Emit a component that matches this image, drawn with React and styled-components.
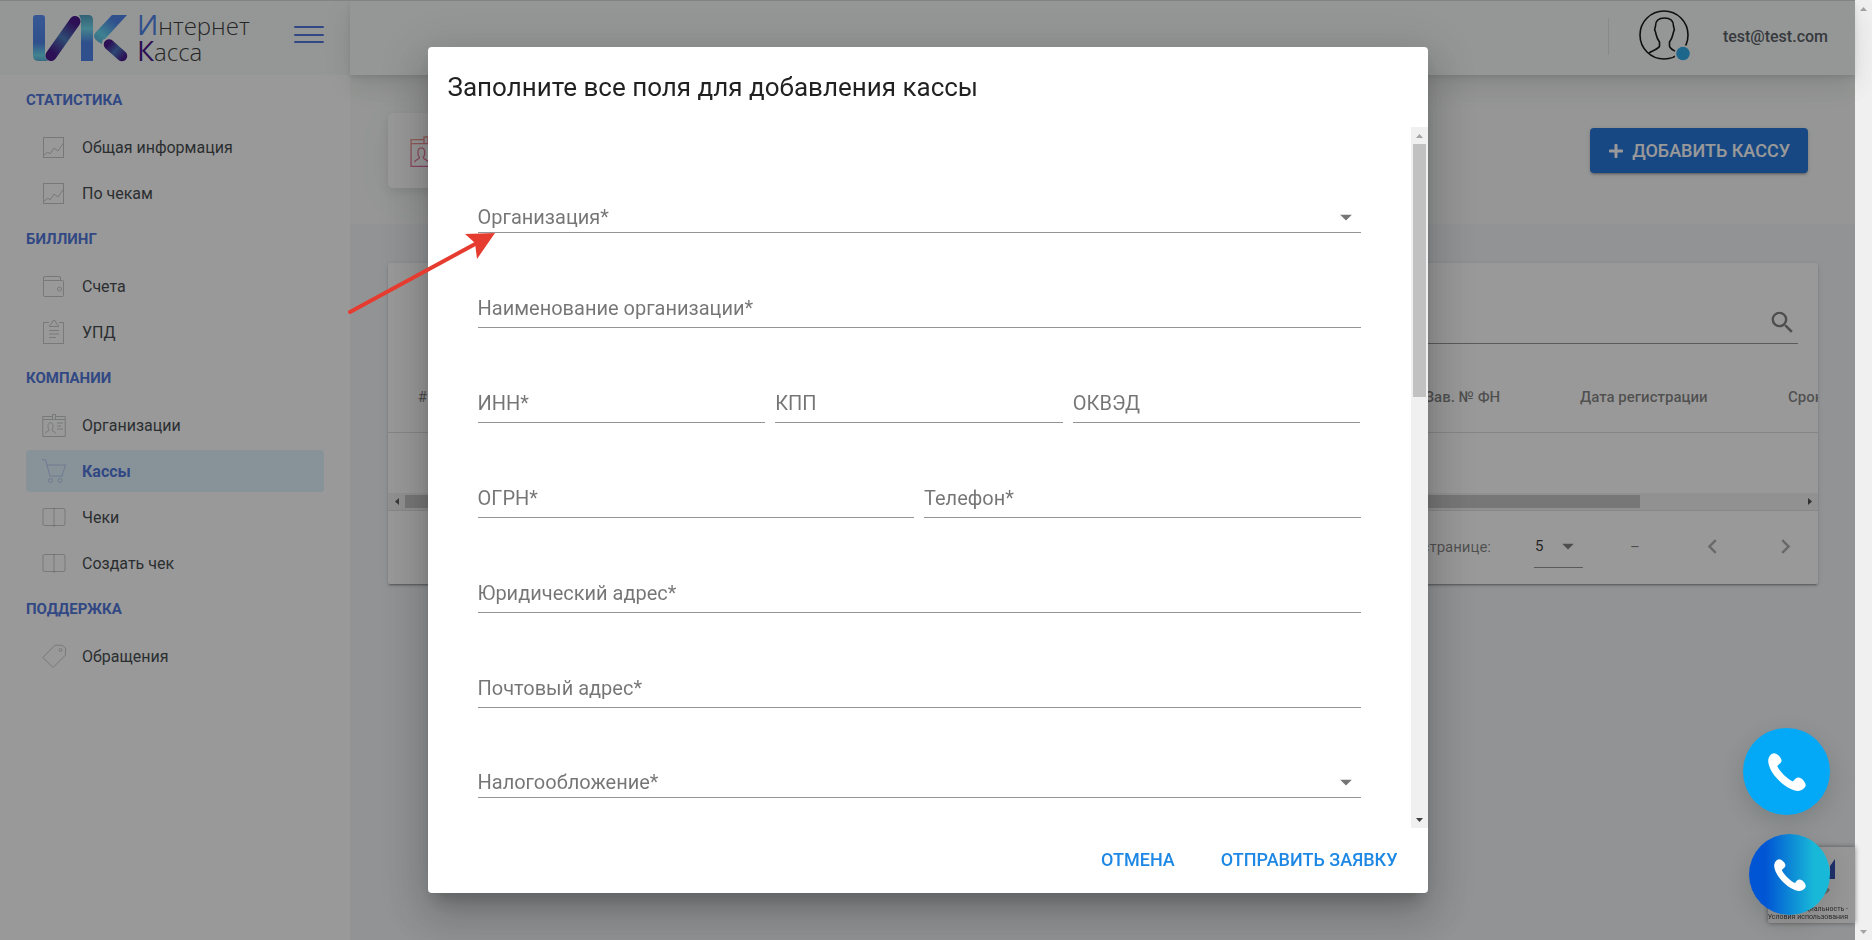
import { useState } from "react";
import styled, { createGlobalStyle } from "styled-components";
import { FaPlus } from "react-icons/fa";
import {
  MdArrowDropDown,
  MdChevronLeft,
  MdChevronRight,
  MdSearch,
} from "react-icons/md";

const GlobalStyle = createGlobalStyle`
  * {
    box-sizing: border-box;
  }
  body {
    margin: 0;
    overflow: hidden;
    font-family: Roboto, sans-serif;
    font-size: 16px;
    color: #495057;
    background: #f1f4f6;
  }
  button, input, select {
    font-family: inherit;
  }
`;

const Page = styled.div`
  display: flex;
  height: 100vh;
`;
const Shell = styled.div`
  flex: 1;
  min-width: 0;
  display: flex;
`;

/* sidebar */
const Sidebar = styled.aside`
  flex: 0 0 350px;
  background: #ffffff;
`;
const LogoBar = styled.div`
  height: 75px;
  padding: 0 26px 0 33px;
  display: flex;
  align-items: center;
  justify-content: space-between;
  background: #f7faf9;
  border-top: 1px solid #d6d6d6;
`;
const Logo = styled.a`
  display: flex;
  align-items: center;
  gap: 8px;
  text-decoration: none;
`;
const LogoText = styled.span`
  display: flex;
  flex-direction: column;
  font-family: "Open Sans", sans-serif;
  font-size: 24px;
  line-height: 25px;
  font-weight: 300;
  color: #2a2a2a;
`;
const LogoCap = styled.span`
  font-size: 28px;
  font-weight: 400;
  color: ${({ $color }) => $color};
`;
const Burger = styled.button`
  width: 30px;
  height: 24px;
  padding: 0 0 7px;
  border: 0;
  background: none;
  display: flex;
  flex-direction: column;
  justify-content: space-between;
  cursor: pointer;
  span {
    height: 2px;
    border-radius: 1px;
    background: #3f6ad8;
  }
`;
const Nav = styled.nav`
  padding: 0 26px;
`;
const NavHeading = styled.h5`
  margin: 13px 0 14px;
  font-size: 15px;
  line-height: 24px;
  font-weight: 700;
  text-transform: uppercase;
  color: #3f6ad8;
`;
const NavList = styled.ul`
  margin: 0;
  padding: 0;
  list-style: none;
  display: grid;
  gap: 4px;
`;
const NavLink = styled.a`
  height: 42px;
  padding: 0 16px;
  display: flex;
  align-items: center;
  gap: 16px;
  border-radius: 4px;
  font-size: 16px;
  text-decoration: none;
  color: ${({ $active }) => ($active ? "#3f6ad8" : "#343a40")};
  font-weight: ${({ $active }) => ($active ? 700 : 400)};
  background: ${({ $active }) => ($active ? "#e0f3ff" : "transparent")};
  svg {
    opacity: 0.3;
  }
`;

/* main column */
const Main = styled.main`
  flex: 1;
  min-width: 0;
`;
const Header = styled.header`
  position: relative;
  height: 75px;
  padding: 0 27px 4px;
  display: flex;
  align-items: center;
  justify-content: flex-end;
  background: #f7faf9;
  border-top: 1px solid #d6d6d6;
  box-shadow: 0 8px 35px rgba(4, 9, 20, 0.06), 0 15px 22px rgba(4, 9, 20, 0.05),
    0 4px 8px rgba(4, 9, 20, 0.06), 0 2px 3px rgba(4, 9, 20, 0.05);
`;
const UserBox = styled.div`
  display: flex;
  align-items: center;
  gap: 30px;
`;
const Divider = styled.span`
  width: 1px;
  height: 37px;
  background: #dee2e6;
`;
const Email = styled.span`
  padding-left: 2px;
  font-size: 16px;
  font-weight: 500;
  color: #495057;
`;
const PageTitle = styled.section`
  padding: 38px 47px 36px 38px;
  display: flex;
  align-items: center;
  justify-content: space-between;
  background: #f7faf8;
`;
const TitleIcon = styled.div`
  width: 75px;
  height: 75px;
  display: flex;
  align-items: center;
  justify-content: center;
  border-radius: 5px;
  background: #ffffff;
  box-shadow: 0 8px 35px rgba(4, 9, 20, 0.06), 0 4px 8px rgba(4, 9, 20, 0.08);
`;
const AddButton = styled.button`
  height: 45px;
  padding: 0 18px;
  display: flex;
  align-items: center;
  gap: 8px;
  border: 0;
  border-radius: 4px;
  background: #1269d6;
  color: #ffffff;
  font-size: 18px;
  font-weight: 500;
  text-transform: uppercase;
  box-shadow: 0 3px 1px -2px rgba(0, 0, 0, 0.2), 0 2px 2px rgba(0, 0, 0, 0.14),
    0 1px 5px rgba(0, 0, 0, 0.12);
`;
const TableCard = styled.section`
  margin: 39px 37px 0 38px;
  background: #ffffff;
  border-radius: 2px;
  box-shadow: 0 3px 1px -2px rgba(0, 0, 0, 0.2), 0 2px 2px rgba(0, 0, 0, 0.14),
    0 1px 5px rgba(0, 0, 0, 0.12);
`;
const SearchRow = styled.div`
  padding: 38px 20px 0;
  display: flex;
  justify-content: flex-end;
`;
const SearchBox = styled.label`
  width: 50%;
  height: 43px;
  padding-right: 1px;
  display: flex;
  align-items: center;
  border-bottom: 1px solid #8c8c8c;
  color: #757575;
  input {
    flex: 1;
    border: 0;
    background: none;
  }
`;
const TableWrap = styled.div`
  overflow: hidden;
`;
const Table = styled.table`
  table-layout: fixed;
  width: 1612px;
  border-collapse: collapse;
  th {
    height: 88px;
    padding: 18px 0 0 30px;
    text-align: left;
    white-space: nowrap;
    font-size: 15px;
    font-weight: 500;
    color: rgba(0, 0, 0, 0.54);
    border-bottom: 1px solid #dcdcdc;
  }
  td {
    height: 61px;
    padding: 0;
  }
`;
const Col = styled.col`
  width: ${({ $width }) => $width}px;
`;
const TableFooter = styled.footer`
  height: 74px;
  padding: 0 11px 2px;
  display: flex;
  align-items: center;
  justify-content: flex-end;
  border-top: 1px solid #e0e0e0;
  font-size: 15px;
  color: rgba(0, 0, 0, 0.54);
`;
const PerPage = styled.label`
  display: flex;
  align-items: center;
  gap: 43px;
`;
const PerPageSelect = styled.span`
  position: relative;
  width: 49px;
  height: 43px;
  border-bottom: 1px solid #8c8c8c;
  select {
    width: 100%;
    height: 100%;
    padding: 0 0 0 1px;
    border: 0;
    background: none;
    appearance: none;
    font-size: 15px;
    color: rgba(0, 0, 0, 0.87);
  }
  svg {
    position: absolute;
    right: 1px;
    top: 7px;
    pointer-events: none;
  }
`;
const Range = styled.span`
  width: 104px;
  text-align: center;
`;
const PagerButton = styled.button`
  width: 43px;
  height: 43px;
  margin-left: ${({ $gap }) => $gap || 0}px;
  padding: 0;
  display: flex;
  align-items: center;
  justify-content: center;
  border: 0;
  background: none;
  color: #a6a6a6;
`;

/* scroll bars */
const Bar = styled.div`
  flex: none;
  display: flex;
  flex-direction: ${({ $vertical }) => ($vertical ? "column" : "row")};
  ${({ $vertical }) => ($vertical ? "width" : "height")}: 17px;
  background: #f0f0f0;
`;
const BarEnd = styled.span`
  width: 17px;
  height: 17px;
  flex: none;
  display: flex;
  align-items: center;
  justify-content: center;
`;
const BarTrack = styled.span`
  flex: 1;
  display: flex;
  flex-direction: inherit;
  padding: ${({ $vertical }) => ($vertical ? "0 2px" : "2px 0")};
`;
const BarThumb = styled.span`
  flex: 0 0 ${({ $part }) => $part}%;
  background: #c1c1c1;
`;

/* dialog */
const Overlay = styled.div`
  position: fixed;
  inset: 0 17px 0 0;
  display: flex;
  align-items: center;
  justify-content: center;
  background: rgba(33, 33, 33, 0.46);
`;
const Dialog = styled.form`
  width: 1000px;
  max-width: 90%;
  height: 90%;
  display: flex;
  flex-direction: column;
  border-radius: 4px;
  background: #ffffff;
  box-shadow: 0 11px 15px -7px rgba(0, 0, 0, 0.2),
    0 24px 38px 3px rgba(0, 0, 0, 0.14), 0 9px 46px 8px rgba(0, 0, 0, 0.12);
`;
const DialogTitle = styled.h2`
  margin: 0;
  padding: 24px 20px;
  font-size: 26px;
  line-height: 32px;
  font-weight: 400;
  color: rgba(0, 0, 0, 0.87);
`;
const DialogBody = styled.div`
  flex: 1;
  min-height: 0;
  display: flex;
`;
const Fields = styled.div`
  flex: 1;
  min-width: 0;
  overflow: hidden;
  padding: 16px 50px 0;
`;
const FieldRow = styled.div`
  display: grid;
  grid-template-columns: repeat(${({ $count }) => $count}, 1fr);
  gap: 10px;
`;
const FieldBox = styled.div`
  position: relative;
  height: ${({ $select }) => ($select ? 90 : 95)}px;
  display: flex;
  align-items: flex-end;
  label {
    position: absolute;
    left: 0;
    bottom: ${({ $select }) => ($select ? 4 : 8)}px;
    font-size: 20px;
    line-height: 24px;
    color: rgba(0, 0, 0, 0.54);
    pointer-events: none;
  }
  input,
  select {
    width: 100%;
    height: 40px;
    padding: 0;
    border: 0;
    border-bottom: 1px solid #949494;
    border-radius: 0;
    outline: 0;
    background: none;
    appearance: none;
    font-size: 20px;
  }
  svg {
    position: absolute;
    right: 1px;
    bottom: 2px;
    color: #757575;
    pointer-events: none;
  }
`;
const Actions = styled.div`
  height: 65px;
  padding: 0 30px 2px;
  display: flex;
  align-items: center;
  justify-content: flex-end;
  gap: 46px;
`;
const TextButton = styled.button`
  padding: 0;
  border: 0;
  background: none;
  color: #1e88e5;
  font-size: 18px;
  font-weight: 500;
  text-transform: uppercase;
`;

/* floating things */
const Captcha = styled.div`
  position: fixed;
  right: 17px;
  bottom: 17px;
  width: 87px;
  height: 76px;
  padding: 12px 7px 0 0;
  display: flex;
  flex-direction: column;
  align-items: flex-end;
  border-radius: 2px 0 0 2px;
  background: #f9f9f9;
  box-shadow: 0 0 5px #808080;
  overflow: hidden;
  white-space: nowrap;
  font-size: 7px;
  line-height: 8px;
  color: #333333;
  svg {
    margin: 0 13px 6px 0;
    flex: none;
  }
`;
const Calls = styled.div`
  position: fixed;
  right: 42px;
  bottom: 25px;
  display: flex;
  flex-direction: column;
  align-items: flex-end;
  gap: 19px;
`;
const CallButton = styled.button`
  width: ${({ $size }) => $size}px;
  height: ${({ $size }) => $size}px;
  padding: 0;
  display: flex;
  align-items: center;
  justify-content: center;
  border: 0;
  border-radius: 50%;
  background: ${({ $fill }) => $fill};
  box-shadow: 0 8px 24px rgba(0, 20, 10, 0.14);
`;
const Arrow = styled.svg`
  position: fixed;
  left: 345px;
  top: 230px;
  pointer-events: none;
`;

const iconPaths = {
  chart: (
    <>
      <rect x="1.5" y="2.5" width="20" height="20" />
      <path d="M2 20l4-3 2 2 4-6 4 3 5.500-8" />
    </>
  ),
  wallet: (
    <>
      <rect x="1.5" y="6.5" width="20" height="16" rx="1" />
      <path d="M1.5 8V4q0-1.500 1.500-1.500h14q1.500 0 1.500 1.500v2.500" />
      <circle cx="17.500" cy="15" r="2" />
    </>
  ),
  note: (
    <>
      <path d="M7 2.500H1.500v21h20v-21H17M7.500 6.500c0-3 2.500-2 2.500-4a2 2 0 0 1 4 0c0 2 2.500 1 2.500 4zM7 10.500h10M7 14h10M7 17.500h7" />
    </>
  ),
  id: (
    <>
      <path d="M10.500 3.500H.8v20h22.400v-20h-9.700M.8 6.500h9.700M13.500 6.500h9.700M10.500 1.500h3v5h-3z" />
      <path d="M3.500 20.500c0-2.500 3.500-1.500 3.500-3.800-1.500-2-1.800-7 1.500-7s3 5 1.500 7c0 2.300 3.500 1.300 3.500 3.800M15 10h6M15 13h4M15 16h6" />
    </>
  ),
  cart: (
    <>
      <path d="M0 .7h3.500L8 17h13M5 6h18.500l-3.500 11" />
      <circle cx="8.500" cy="21.500" r="2" />
      <circle cx="18" cy="21.500" r="2" />
    </>
  ),
  book: (
    <>
      <path d="M12 3v19M12 3.500H2.500q-1.500 0-1.500 1.500v14q0 1.500 1.500 1.500h19q1.500 0 1.500-1.500V5q0-1.500-1.500-1.500z" />
    </>
  ),
  tag: (
    <>
      <path d="M.8 13.500L13 1.200h7.500l3 3V11L11 23.500z" />
      <circle cx="18.500" cy="6" r="1.500" />
    </>
  ),
};

function Icon({ name, size = 24, stroke = "currentColor", children }) {
  return (
    <svg
      width={size}
      height={size}
      viewBox="0 0 24 24"
      fill="none"
      stroke={stroke}
      strokeWidth="1"
      overflow="visible"
      aria-hidden="true"
    >
      {children}
      {iconPaths[name]}
    </svg>
  );
}

function LogoMark() {
  return (
    <svg width="96" height="47" viewBox="0 0 96 47" aria-hidden="true">
      <defs>
        <linearGradient id="barDown" x1="0" y1="0" x2="0" y2="1">
          <stop offset="0.1" stopColor="#4886f5" />
          <stop offset="0.6" stopColor="#3c78e8" />
          <stop offset="0.88" stopColor="#5fd6ee" />
          <stop offset="1" stopColor="#4aa9d8" />
        </linearGradient>
        <linearGradient id="barUp" x1="0" y1="0" x2="0" y2="1">
          <stop offset="0" stopColor="#4497bd" />
          <stop offset="0.3" stopColor="#62d8ee" />
          <stop offset="0.6" stopColor="#3c78e8" />
          <stop offset="1" stopColor="#3c78e8" />
        </linearGradient>
        <linearGradient id="arm" x1="1" y1="0" x2="0.1" y2="1">
          <stop offset="0.3" stopColor="#3c78e8" />
          <stop offset="0.75" stopColor="#58d3ee" />
          <stop offset="1" stopColor="#4aa9d8" />
        </linearGradient>
        <linearGradient
          id="slash"
          gradientUnits="userSpaceOnUse"
          x1="14"
          y1="44"
          x2="46"
          y2="2"
        >
          <stop offset="0.15" stopColor="#360080" />
          <stop offset="0.5" stopColor="#3a70b8" />
          <stop offset="0.85" stopColor="#360080" />
        </linearGradient>
        <linearGradient
          id="leg"
          gradientUnits="userSpaceOnUse"
          x1="72"
          y1="26"
          x2="94"
          y2="45"
        >
          <stop offset="0.15" stopColor="#360080" />
          <stop offset="0.5" stopColor="#3a68b8" />
          <stop offset="0.9" stopColor="#360080" />
        </linearGradient>
      </defs>
      <path
        d="M3 0h6q3 0 3 3v35q0 5 3 8H6q-6 0-6-5V3q0-3 3-3z"
        fill="url(#barDown)"
      />
      <path d="M46 0h9q5 0 5 5v41H48V8q0-5-2-8z" fill="url(#barUp)" />
      <path
        d="M79 0h15L72 24q-3 0-3 5-8-4-8-8 0-2 2-4z"
        fill="url(#arm)"
      />
      <path
        d="M18 40.500L42 6.500"
        stroke="url(#slash)"
        strokeWidth="11"
        strokeLinecap="round"
      />
      <path
        d="M76 29.500L89 41"
        stroke="url(#leg)"
        strokeWidth="10.500"
        strokeLinecap="round"
      />
    </svg>
  );
}

function Avatar() {
  return (
    <svg width="52" height="52" viewBox="0 0 52 52" aria-hidden="true">
      <g fill="none" stroke="#000000" strokeWidth="1.6">
        <circle cx="25" cy="25" r="24" />
        <path d="M10 43c4-3 10-4 10.500-7v-4c-3-4-3-6-4-10-2-4 0-4 0-6 0-5 3-8 9-8s9 3 9 8c0 2 2 2 0 6-1 4-1 6-4 10v4c.5 3 4 4 7 6" />
      </g>
      <circle cx="44" cy="43.500" r="8.500" fill="#f7faf9" />
      <circle cx="44" cy="43.500" r="6.800" fill="#1aa3e8" />
    </svg>
  );
}

function Phone({ size }) {
  return (
    <svg width={size} height={size} viewBox="0 0 38 38" aria-hidden="true">
      <path
        fill="#ffffff"
        d="M.3 6.500C1 3 3.500.3 6 .2c3 0 7.600 4.300 7.600 7.300 0 2.500-2.200 3.300-4.300 5.500C11 18 20 26.500 25 28.500c1.500-2 3-4.100 5.500-4.100 3 0 7.200 4.600 7.200 7.600 0 2.500-3.700 5.800-7.700 5.900C18 37.500-1 19 .3 6.500z"
      />
    </svg>
  );
}

const arrows = {
  up: "M0 4l3.500-4L7 4z",
  down: "M0 0h7L3.500 4z",
  left: "M4 0v7L0 3.500z",
  right: "M0 0l4 3.500L0 7z",
};

function ScrollEnd({ dir, color }) {
  const vertical = dir === "up" || dir === "down";
  return (
    <BarEnd>
      <svg width={vertical ? 7 : 4} height={vertical ? 4 : 7} fill={color}>
        <path d={arrows[dir]} />
      </svg>
    </BarEnd>
  );
}

function ScrollBar({ vertical, part, startOff, endOff }) {
  return (
    <Bar $vertical={vertical} aria-hidden="true">
      <ScrollEnd
        dir={vertical ? "up" : "left"}
        color={startOff ? "#a3a3a3" : "#505050"}
      />
      <BarTrack $vertical={vertical}>
        {part && <BarThumb $part={part} />}
      </BarTrack>
      <ScrollEnd
        dir={vertical ? "down" : "right"}
        color={endOff ? "#a3a3a3" : "#404040"}
      />
    </Bar>
  );
}

const menu = [
  {
    title: "Статистика",
    items: [
      { icon: "chart", text: "Общая информация" },
      { icon: "chart", text: "По чекам" },
    ],
  },
  {
    title: "Биллинг",
    items: [
      { icon: "wallet", text: "Счета" },
      { icon: "note", text: "УПД" },
    ],
  },
  {
    title: "Компании",
    items: [
      { icon: "id", text: "Организации" },
      { icon: "cart", text: "Кассы", active: true },
      { icon: "book", text: "Чеки" },
      { icon: "book", text: "Создать чек" },
    ],
  },
  {
    title: "Поддержка",
    items: [{ icon: "tag", text: "Обращения" }],
  },
];

const rows = [
  [{ id: "org", text: "Организация*", select: true }],
  [{ id: "name", text: "Наименование организации*" }],
  [
    { id: "inn", text: "ИНН*" },
    { id: "kpp", text: "КПП" },
    { id: "okved", text: "ОКВЭД" },
  ],
  [
    { id: "ogrn", text: "ОГРН*" },
    { id: "phone", text: "Телефон*" },
  ],
  [{ id: "legal", text: "Юридический адрес*" }],
  [{ id: "post", text: "Почтовый адрес*" }],
  [{ id: "tax", text: "Налогообложение*", select: true }],
];

function Field({ field }) {
  const [value, setValue] = useState("");
  const onChange = (e) => setValue(e.target.value);

  return (
    <FieldBox $select={field.select}>
      {!value && <label htmlFor={field.id}>{field.text}</label>}
      {field.select ? (
        <>
          <select id={field.id} value={value} onChange={onChange}>
            <option value="" />
          </select>
          <MdArrowDropDown size={28} />
        </>
      ) : (
        <input id={field.id} value={value} onChange={onChange} />
      )}
    </FieldBox>
  );
}

function SideMenu() {
  return (
    <Sidebar>
      <LogoBar>
        <Logo href="#">
          <LogoMark />
          <LogoText>
            <span>
              <LogoCap $color="#3c78e8">И</LogoCap>нтернет
            </span>
            <span>
              <LogoCap $color="#360080">К</LogoCap>асса
            </span>
          </LogoText>
        </Logo>
        <Burger type="button" aria-label="Меню">
          <span />
          <span />
          <span />
        </Burger>
      </LogoBar>
      <Nav>
        {menu.map((group) => (
          <div key={group.title}>
            <NavHeading>{group.title}</NavHeading>
            <NavList>
              {group.items.map((item) => (
                <li key={item.text}>
                  <NavLink href="#" $active={item.active}>
                    <Icon name={item.icon} />
                    {item.text}
                  </NavLink>
                </li>
              ))}
            </NavList>
          </div>
        ))}
      </Nav>
    </Sidebar>
  );
}

function CashTable() {
  return (
    <TableCard>
      <SearchRow>
        <SearchBox>
          <input type="search" aria-label="Поиск" />
          <MdSearch size={29} />
        </SearchBox>
      </SearchRow>
      <TableWrap>
        <Table>
          <colgroup>
            <Col $width={60} />
            <Col $width={947} />
            <Col $width={155} />
            <Col $width={208} />
            <Col $width={242} />
          </colgroup>
          <thead>
            <tr>
              <th>#</th>
              <th />
              <th>Зав. № ФН</th>
              <th>Дата регистрации</th>
              <th>Срок ФН</th>
            </tr>
          </thead>
          <tbody>
            <tr>
              <td colSpan={5} />
            </tr>
          </tbody>
        </Table>
      </TableWrap>
      <ScrollBar part={88.5} />
      <TableFooter>
        <PerPage>
          Строк на странице:
          <PerPageSelect>
            <select defaultValue="5">
              <option>5</option>
              <option>10</option>
            </select>
            <MdArrowDropDown size={28} />
          </PerPageSelect>
        </PerPage>
        <Range>–</Range>
        <PagerButton type="button" aria-label="Назад" $gap={4}>
          <MdChevronLeft size={29} />
        </PagerButton>
        <PagerButton type="button" aria-label="Вперёд" $gap={30}>
          <MdChevronRight size={29} />
        </PagerButton>
      </TableFooter>
    </TableCard>
  );
}

function AddDialog() {
  return (
    <Overlay>
      <Dialog onSubmit={(e) => e.preventDefault()}>
        <DialogTitle>Заполните все поля для добавления кассы</DialogTitle>
        <DialogBody>
          <Fields>
            {rows.map((row) => (
              <FieldRow key={row[0].id} $count={row.length}>
                {row.map((field) => (
                  <Field key={field.id} field={field} />
                ))}
              </FieldRow>
            ))}
          </Fields>
          <ScrollBar vertical part={38} startOff />
        </DialogBody>
        <Actions>
          <TextButton type="button">Отмена</TextButton>
          <TextButton type="submit">Отправить заявку</TextButton>
        </Actions>
      </Dialog>
    </Overlay>
  );
}

function App() {
  return (
    <>
      <GlobalStyle />
      <Page>
        <Shell>
          <SideMenu />
          <Main>
            <Header>
              <UserBox>
                <Divider />
                <Avatar />
                <Email>test@test.com</Email>
              </UserBox>
            </Header>
            <PageTitle>
              <TitleIcon>
                <Icon name="id" size={32} stroke="url(#sunset)">
                  <defs>
                    <linearGradient
                      id="sunset"
                      gradientUnits="userSpaceOnUse"
                      x1="0"
                      y1="0"
                      x2="14"
                      y2="24"
                    >
                      <stop offset="0" stopColor="#f0a080" />
                      <stop offset="1" stopColor="#e055a0" />
                    </linearGradient>
                  </defs>
                </Icon>
              </TitleIcon>
              <AddButton type="button">
                <FaPlus size={16} />
                Добавить кассу
              </AddButton>
            </PageTitle>
            <CashTable />
          </Main>
        </Shell>
        <ScrollBar vertical startOff endOff />
      </Page>
      <Captcha>
        <svg width="32" height="40" viewBox="0 0 32 40" aria-hidden="true">
          <path d="M32 0v20H22l5-6V7z" fill="#1c3aa9" />
          <path d="M10 34q10 6 17-3l-5-5-8 4z" fill="#a0a0a0" />
        </svg>
        <span>Конфиденциальность -</span>
        <span>Условия использования</span>
      </Captcha>
      <AddDialog />
      <Calls>
        <CallButton type="button" aria-label="Позвонить" $size={87} $fill="#03a9f7">
          <Phone size={38} />
        </CallButton>
        <CallButton
          type="button"
          aria-label="Заказать звонок"
          $size={81}
          $fill="linear-gradient(90deg, #0055d4 20%, #18b8d8 80%)"
        >
          <Phone size={32} />
        </CallButton>
      </Calls>
      <Arrow width="152" height="90" viewBox="0 0 152 90" aria-hidden="true">
        <path
          d="M5 82L132 13"
          stroke="#e63c30"
          strokeWidth="4"
          strokeLinecap="round"
        />
        <path d="M150 3L120 4l10 9 2 16z" fill="#e63c30" />
      </Arrow>
    </>
  );
}

export default App;
